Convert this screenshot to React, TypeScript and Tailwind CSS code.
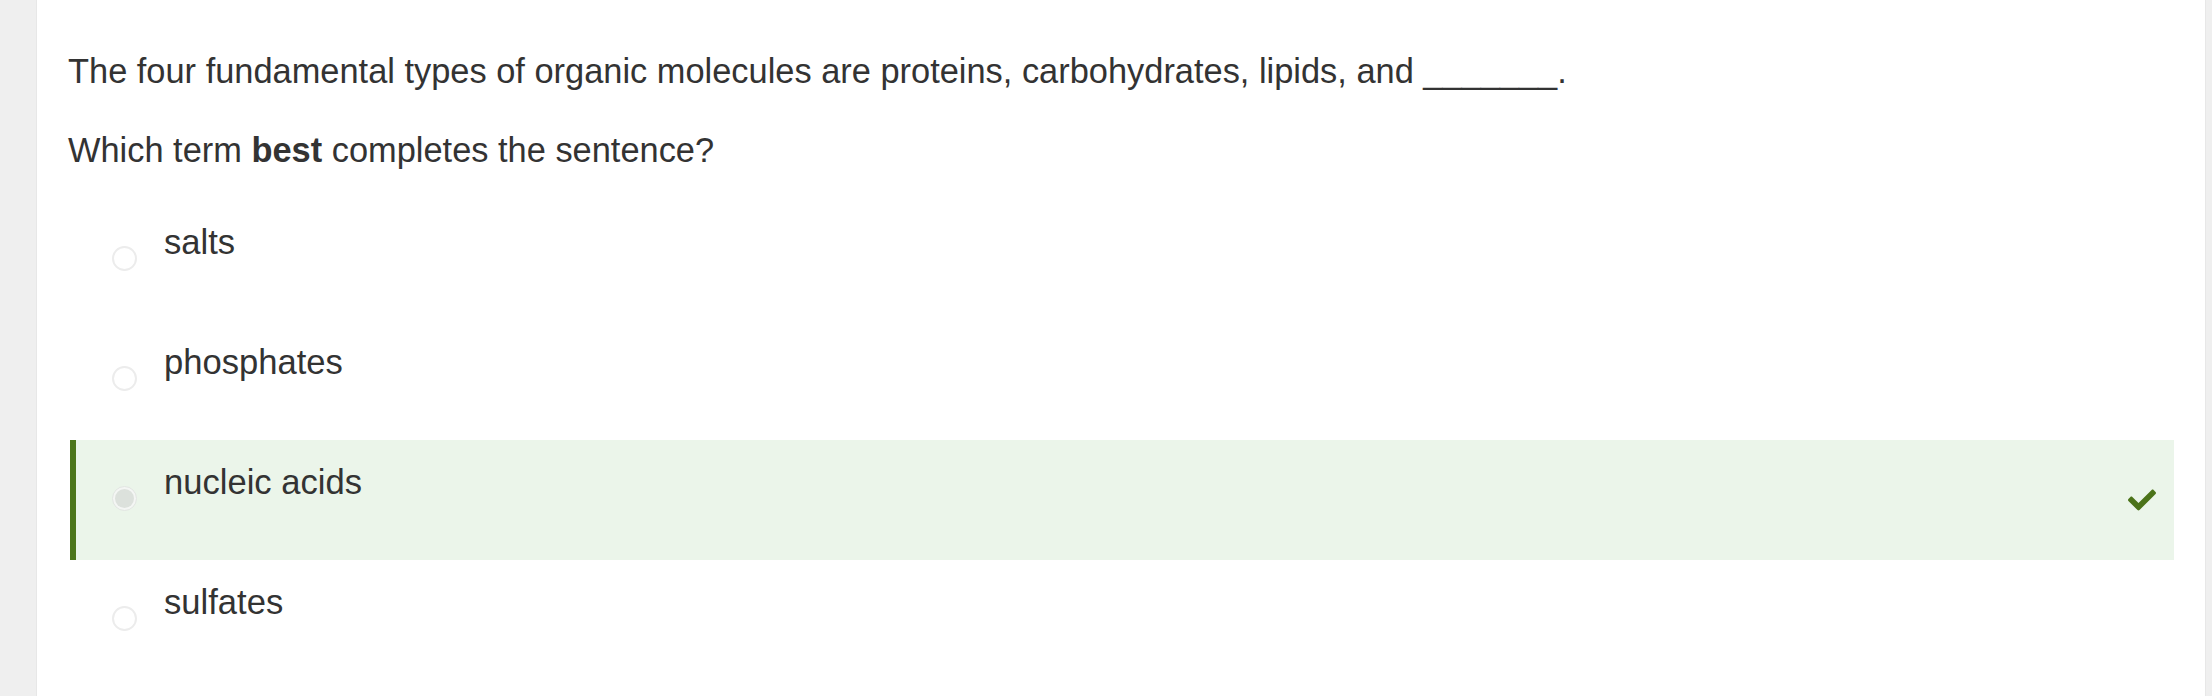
import React from "react";
import { FaCheck } from "react-icons/fa";

const options = [
  { label: "salts", selected: false },
  { label: "phosphates", selected: false },
  { label: "nucleic acids", selected: true },
  { label: "sulfates", selected: false },
];

export default function App() {
  return (
    <div
      className="flex h-[696px] w-full overflow-hidden bg-white text-[#333333]"
      style={{ fontFamily: '"Liberation Sans", Arial, Helvetica, sans-serif' }}
    >
      <div className="w-[37px] shrink-0 bg-[#efefef] border-r border-[#e7e7e7]" />
      <div className="flex-1 pl-[31px] pr-[31px] pt-[51px]">
        <p className="text-[34.4px] leading-[40px]">
          The four fundamental types of organic molecules are proteins, carbohydrates, lipids, and _______.
        </p>
        <p className="mt-[39px] text-[34.4px] leading-[40px]">
          Which term <span className="font-bold">best</span> completes the sentence?
        </p>
        <div className="mt-[30px] ml-[2px] flex flex-col">
          {options.map((o) => (
            <div
              key={o.label}
              className={
                o.selected
                  ? "flex h-[120px] items-start border-l-[6px] border-[#4c761c] bg-[#ebf5ea] pl-[36px] pr-[18px]"
                  : "flex h-[120px] items-start border-l-[6px] border-transparent pl-[36px] pr-[18px]"
              }
            >
              <div className="mt-[46px] shrink-0">
                {o.selected ? (
                  <div className="flex h-[25px] w-[25px] items-center justify-center rounded-full border border-[#e2e6e2] bg-[#f4f6f4]">
                    <div className="h-[19px] w-[19px] rounded-full bg-[#dce1dc]" />
                  </div>
                ) : (
                  <div className="h-[25px] w-[25px] rounded-full border-2 border-[#ececec] bg-white" />
                )}
              </div>
              <div className="ml-[27px] mt-[22px] flex-1 text-[34.6px] leading-[40px]">{o.label}</div>
              {o.selected && (
                <div className="self-center text-[#4b7319]">
                  <FaCheck size={28} />
                </div>
              )}
            </div>
          ))}
        </div>
      </div>
      <div className="w-[7px] shrink-0 bg-[#efefef] border-l border-[#e7e7e7]" />
    </div>
  );
}
